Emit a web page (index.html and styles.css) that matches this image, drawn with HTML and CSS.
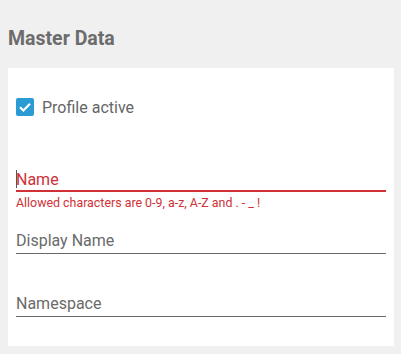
FILE: index.html
```html
<!DOCTYPE html>
<html>
<head>
<meta charset="utf-8">
<link rel="stylesheet" href="styles.css">
</head>
<body>
<h2 class="title">Master Data</h2>
<div class="card">
  <label class="check">
    <span class="box"><svg width="18" height="18" viewBox="0 0 18 18"><path d="M4 9.2 L7.4 12.5 L14 5.8" fill="none" stroke="#fff" stroke-width="2.2"/></svg></span>
    <span class="check-label">Profile active</span>
  </label>
  <div class="field field-error">
    <div class="input"><span class="caret"></span>Name</div>
    <div class="hint">Allowed characters are 0-9, a-z, A-Z and . - _ !</div>
  </div>
  <div class="field field-after-error">
    <div class="input">Display Name</div>
  </div>
  <div class="field">
    <div class="input">Namespace</div>
  </div>
</div>
</body>
</html>
```
FILE: styles.css
```css
html, body {
  margin: 0;
  padding: 0;
  background: #f0f0f0;
  font-family: Roboto, "Liberation Sans", sans-serif;
}
body {
  padding: 0 7px 0 8px;
}
.title {
  margin: 0;
  padding-top: 27px;
  height: 41px;
  font-size: 19.5px;
  line-height: 24px;
  font-weight: 700;
  color: #6c6c6c;
}
.card {
  background: #fff;
  padding: 30px 8px 0 8px;
  height: 278px;
  box-sizing: border-box;
}
.check {
  display: flex;
  align-items: center;
  gap: 8px;
  height: 18px;
}
.box {
  width: 18px;
  height: 18px;
  border-radius: 2px;
  background: #2b9bd3;
  display: flex;
}
.check-label {
  font-size: 16px;
  color: #666;
}
.field {
  margin-top: 40px;
}
.field-error {
  margin-top: 54px;
}
.field-after-error {
  margin-top: 21px;
}
.input {
  position: relative;
  font-size: 16px;
  line-height: 20px;
  padding-bottom: 2px;
  color: #6a6a6a;
  border-bottom: 1px solid #6a6a6a;
}
.field-error .input {
  color: #cf3137;
  border-bottom: 2px solid #cf3137;
  padding-bottom: 0;
}
.caret {
  position: absolute;
  left: 0;
  top: 0;
  width: 1px;
  height: 18px;
  background: #555;
}
.hint {
  font-size: 12.4px;
  line-height: 14px;
  margin-top: 4px;
  color: #cf3137;
}
```
